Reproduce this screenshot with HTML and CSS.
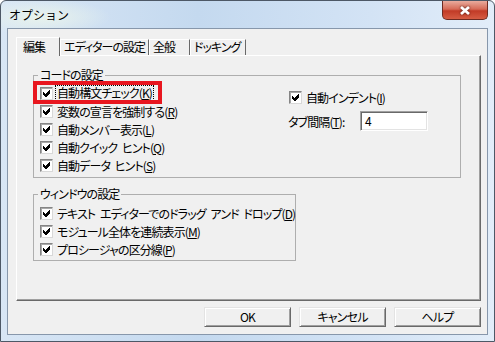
FILE: index.html
```html
<!DOCTYPE html>
<html lang="ja">
<head>
    <meta charset="UTF-8">
    <title>オプション</title>
    <link rel="stylesheet" href="styles.css">
</head>
<body>
    <div class="window">
        <div class="titlebar">
            <span class="title">オプション</span>
            <div class="close">
                <svg class="close-icon" viewBox="0 0 14 11">
                    <path d="M3 2 L11 9 M11 2 L3 9"/>
                </svg>
            </div>
        </div>

        <div class="client">
            <div class="tab-strip">
                <div class="tab active tab-edit">編集</div>
                <div class="tab tab-editor">エディターの設定</div>
                <div class="tab tab-general">全般</div>
                <div class="tab tab-docking">ドッキング</div>
            </div>

            <div class="tab-panel">
                <fieldset class="group group-code">
                    <legend>コードの設定</legend>
                    <div class="group-body">
                        <div class="col">
                            <div class="row marked">
                                <span class="check"><svg viewBox="1 1 11 11"><polygon points="3,5 5,7 9,3 10,3 10,6 6,10 5,10 3,8"/></svg></span>
                                <span class="focus">自動構文チェック(<u>K</u>)</span>
                                <span class="highlight"></span>
                            </div>
                            <div class="row">
                                <span class="check"><svg viewBox="1 1 11 11"><polygon points="3,5 5,7 9,3 10,3 10,6 6,10 5,10 3,8"/></svg></span>
                                <span>変数の宣言を強制する(<u>R</u>)</span>
                            </div>
                            <div class="row">
                                <span class="check"><svg viewBox="1 1 11 11"><polygon points="3,5 5,7 9,3 10,3 10,6 6,10 5,10 3,8"/></svg></span>
                                <span>自動メンバー表示(<u>L</u>)</span>
                            </div>
                            <div class="row">
                                <span class="check"><svg viewBox="1 1 11 11"><polygon points="3,5 5,7 9,3 10,3 10,6 6,10 5,10 3,8"/></svg></span>
                                <span>自動クイック ヒント(<u>Q</u>)</span>
                            </div>
                            <div class="row">
                                <span class="check"><svg viewBox="1 1 11 11"><polygon points="3,5 5,7 9,3 10,3 10,6 6,10 5,10 3,8"/></svg></span>
                                <span>自動データ ヒント(<u>S</u>)</span>
                            </div>
                        </div>
                        <div class="col col-right">
                            <div class="row">
                                <span class="check"><svg viewBox="1 1 11 11"><polygon points="3,5 5,7 9,3 10,3 10,6 6,10 5,10 3,8"/></svg></span>
                                <span>自動インデント(<u>I</u>)</span>
                            </div>
                            <div class="row tab-width">
                                <span class="field-label">タブ間隔(<u>T</u>):</span>
                                <span class="textbox">4</span>
                            </div>
                        </div>
                    </div>
                </fieldset>

                <fieldset class="group group-window">
                    <legend>ウィンドウの設定</legend>
                    <div class="col">
                        <div class="row">
                            <span class="check"><svg viewBox="1 1 11 11"><polygon points="3,5 5,7 9,3 10,3 10,6 6,10 5,10 3,8"/></svg></span>
                            <span>テキスト エディターでのドラッグ アンド ドロップ(<u>D</u>)</span>
                        </div>
                        <div class="row">
                            <span class="check"><svg viewBox="1 1 11 11"><polygon points="3,5 5,7 9,3 10,3 10,6 6,10 5,10 3,8"/></svg></span>
                            <span>モジュール全体を連続表示(<u>M</u>)</span>
                        </div>
                        <div class="row">
                            <span class="check"><svg viewBox="1 1 11 11"><polygon points="3,5 5,7 9,3 10,3 10,6 6,10 5,10 3,8"/></svg></span>
                            <span>プロシージャの区分線(<u>P</u>)</span>
                        </div>
                    </div>
                </fieldset>
            </div>

            <div class="buttons">
                <button>OK</button>
                <button>キャンセル</button>
                <button>ヘルプ</button>
            </div>
        </div>
    </div>
</body>
</html>
```

FILE: styles.css
```css
* {
    margin: 0;
    padding: 0;
    box-sizing: border-box;
}

body {
    font-family: "Noto Sans CJK JP", "Liberation Sans", sans-serif;
    font-size: 12px;
    font-feature-settings: "palt";
    letter-spacing: -0.9px;
    word-spacing: 3px;
    color: #000;
    background: #ffffff;
    width: 495px;
    height: 342px;
    overflow: hidden;
}

.window {
    width: 495px;
    height: 342px;
    border: 1px solid #4d5866;
    border-radius: 6px 6px 0 0;
    background:
        radial-gradient(ellipse 70px 18px at 40px 16px, rgba(235, 245, 235, 0.9), rgba(235, 245, 235, 0)),
        linear-gradient(to right, #d8e6f5, #c4d9ef 40%, #d3e3f5 75%, #e2edf9);
    display: flex;
    flex-direction: column;
    padding: 0 6px 6px 6px;
}

/* title bar */
.titlebar {
    height: 27px;
    display: flex;
    justify-content: space-between;
    align-items: flex-start;
    padding-left: 2px;
}

.title {
    margin-top: 6px;
    line-height: 16px;
    font-size: 12px;
    font-feature-settings: normal;
    letter-spacing: 0;
}

.close {
    width: 46px;
    height: 19px;
    border: 1px solid #6d2b22;
    border-top: none;
    border-radius: 0 0 5px 5px;
    background: linear-gradient(#e9ab9d, #d66b57 45%, #c23b27 55%, #d65c43);
    display: flex;
    align-items: center;
    justify-content: center;
}

.close-icon {
    width: 14px;
    height: 11px;
    stroke: #ffffff;
    stroke-width: 2.8;
    fill: none;
    filter: drop-shadow(0 0 1px #4a140c);
}

/* client area */
.client {
    flex: 1;
    background: #f0f0f0;
    border: 1px solid #8797ab;
    padding: 8px 6px 7px 8px;
    display: flex;
    flex-direction: column;
}

.tab-strip {
    display: flex;
    height: 18px;
    align-items: flex-end;
    position: relative;
    z-index: 1;
}

.tab {
    height: 16px;
    padding: 0 0 0 3px;
    border: 1px solid;
    border-color: #ffffff #696969 transparent #ffffff;
    border-bottom: none;
    line-height: 14px;
    white-space: nowrap;
    letter-spacing: -1px;
}

.tab.active {
    height: 19px;
    margin-bottom: -1px;
    padding: 2px 0 0 6px;
    background: #f0f0f0;
}

.tab-edit { width: 44px; }
.tab-editor { width: 89px; }
.tab-general { width: 41px; }
.tab-docking { width: 56px; }

.tab-panel {
    height: 246px;
    border: 1px solid;
    border-color: #ffffff #696969 #696969 #ffffff;
    box-shadow: inset -1px -1px #a0a0a0;
    padding: 12px 0 0 16px;
}

/* group boxes */
.group {
    border: 1px solid #aeaeae;
    padding: 2px 0 3px 6px;
}

.group legend {
    font-size: 12px;
    line-height: 14px;
    padding: 0 2px;
    margin-left: -2px;
}

.group-code {
    width: 428px;
}

.group-window {
    width: 258px;
    margin-top: 9px;
    padding-top: 3px;
    padding-bottom: 2px;
}

.group-body {
    display: grid;
    grid-template-columns: 249px 1fr;
}

.col-right {
    padding-top: 4px;
}

.row {
    display: flex;
    align-items: center;
    gap: 4px;
    height: 18px;
    white-space: nowrap;
}

.row.marked {
    position: relative;
}

.highlight {
    position: absolute;
    left: -7px;
    top: -3px;
    width: 129px;
    height: 23px;
    border: 4px solid #e8161f;
}

.focus {
    outline: 1px dotted #000;
    padding: 0 1px;
    margin-left: -1px;
    line-height: 14px;
}

.check {
    width: 13px;
    height: 13px;
    flex-shrink: 0;
    border: 1px solid;
    border-color: #858585 #d8d8d8 #d8d8d8 #858585;
    box-shadow: inset 1px 1px #a8a8a8;
    background: #ffffff;
}

.check svg {
    display: block;
    width: 11px;
    height: 11px;
    fill: #000;
    shape-rendering: crispEdges;
}

.tab-width {
    height: 20px;
    margin-top: 5px;
    gap: 12px;
    margin-left: -1px;
}

.field-label {
    width: 60px;
}

.textbox {
    width: 68px;
    height: 20px;
    border: 1px solid;
    border-color: #a0a0a0 #ffffff #ffffff #a0a0a0;
    box-shadow: inset 1px 1px #696969, inset -1px -1px #e3e3e3;
    background: #ffffff;
    padding-left: 4px;
    line-height: 18px;
}

/* dialog buttons */
.buttons {
    margin-top: 6px;
    display: flex;
    justify-content: flex-end;
    gap: 8px;
}

button {
    width: 87px;
    height: 20px;
    font-family: inherit;
    font-size: 12px;
    font-feature-settings: "palt";
    letter-spacing: -0.8px;
    background: #f0f0f0;
    color: #000;
    border: 1px solid;
    border-color: #e3e3e3 #696969 #696969 #e3e3e3;
    box-shadow: inset 1px 1px #ffffff, inset -1px -1px #a0a0a0;
    line-height: 16px;
}
```
